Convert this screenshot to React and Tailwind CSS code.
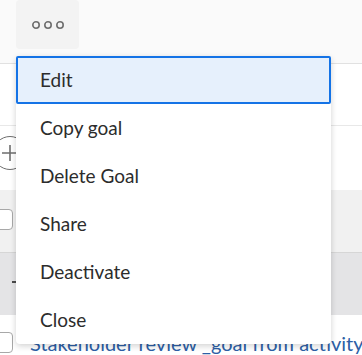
export default function App() {
  const items = ["Edit", "Copy goal", "Delete Goal", "Share", "Deactivate", "Close"];
  return (
    <div className="relative w-[362px] h-[355px] overflow-hidden bg-white" style={{ fontFamily: "Lato, 'Open Sans', sans-serif" }}>
      {/* header */}
      <div className="h-[64px] bg-[#fafafa] border-b border-[#e1e1e1] pl-[16px]">
        <div className="w-[63px] h-[49px] bg-[#f3f3f3] rounded-[4px] flex items-center justify-center">
          <svg width="32" height="10" viewBox="0 0 32 10">
            <circle cx="4" cy="5" r="3.2" fill="none" stroke="#6e6e6e" strokeWidth="1.6" />
            <circle cx="16" cy="5" r="3.2" fill="none" stroke="#6e6e6e" strokeWidth="1.6" />
            <circle cx="28" cy="5" r="3.2" fill="none" stroke="#6e6e6e" strokeWidth="1.6" />
          </svg>
        </div>
      </div>
      <div className="h-[62px] border-b border-[#e8e8e8]"></div>
      <div className="h-[64px] flex items-center">
        <div className="ml-[-7px] mt-[-10px] w-[34px] h-[34px] rounded-full border-[1.5px] border-[#6e6e6e] flex items-center justify-center">
          <svg width="20" height="20" viewBox="0 0 20 20">
            <path d="M10 2v16M2 10h16" stroke="#6e6e6e" strokeWidth="1.6" />
          </svg>
        </div>
      </div>
      <div className="h-[63px] bg-[#f1f1f1] border-b border-[#d6d6d6] flex items-center">
        <div className="ml-[-8px] mt-[-4px] w-[21px] h-[21px] rounded-[4px] border border-[#a8a8a8] bg-white"></div>
      </div>
      <div className="h-[62px] bg-[#e4e4e6] flex items-center">
        <div className="ml-[12px] mt-[4px] flex flex-col items-end">
          <div className="w-[5px] h-[2px] bg-[#4b4b4b]"></div>
          <div className="w-[1px] h-[8px] bg-[#9a9a9a]"></div>
        </div>
      </div>
      <div className="flex items-start pt-[17px]">
        <div className="ml-[-8px] w-[21px] h-[21px] rounded-[4px] border border-[#a8a8a8] bg-white shrink-0"></div>
        <div className="ml-[17px] mt-[-2px] text-[20px] leading-[26px] text-[#2d5fa6] whitespace-nowrap">
          Stakeholder review _goal from activity
        </div>
      </div>

      {/* menu */}
      <div className="absolute left-[16px] top-[56px] w-[315px] bg-white rounded-[4px] shadow-[0_2px_6px_rgba(0,0,0,0.18)]">
        {items.map((it, i) => (
          <div
            key={it}
            className={
              i === 0
                ? "h-[48px] flex items-center pl-[22px] text-[19px] text-[#2c2c2c] bg-[#e6f0fc] border-[2px] border-[#1473e6] rounded-[2px]"
                : "h-[48px] flex items-center pl-[24px] text-[19px] text-[#2c2c2c]"
            }
          >
            {it}
          </div>
        ))}
      </div>
    </div>
  );
}
